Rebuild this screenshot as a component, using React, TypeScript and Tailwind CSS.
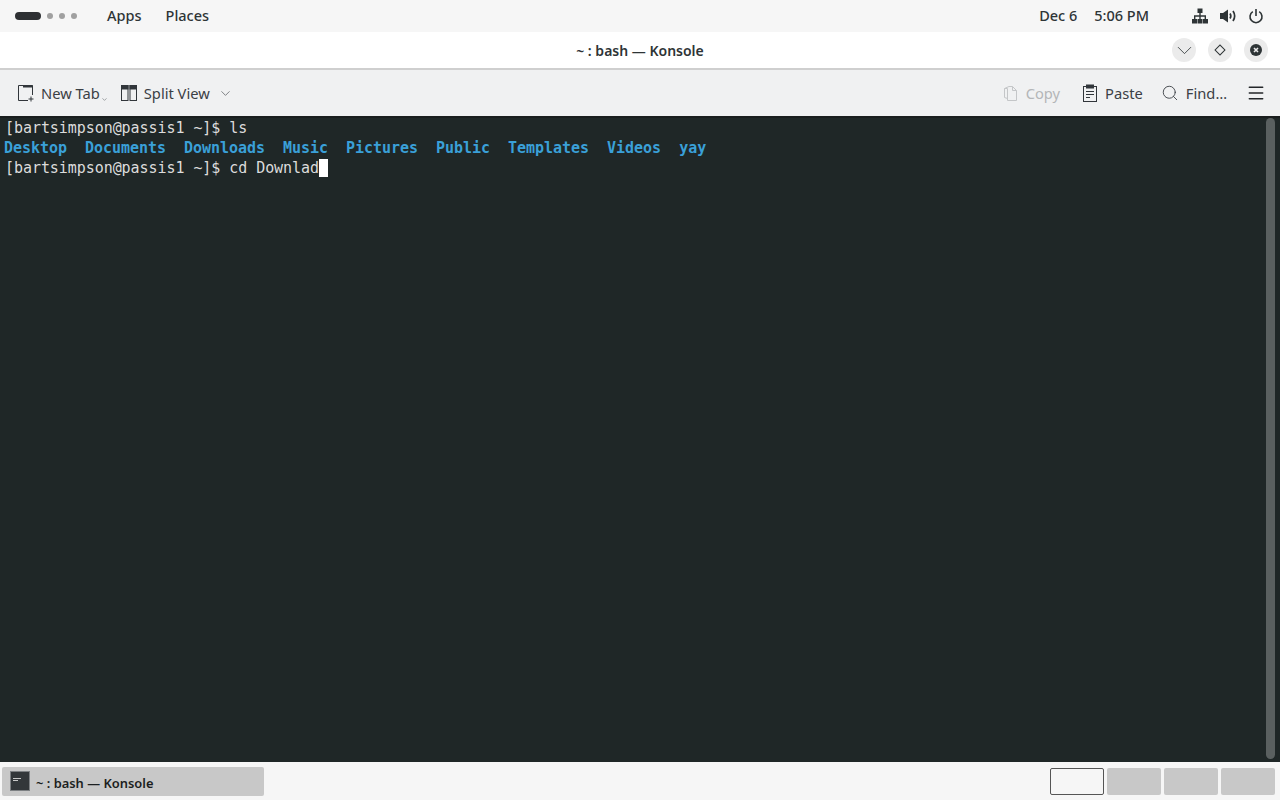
import React from 'react';
import { ChevronDown, Search, Menu } from 'lucide-react';

function NetworkIcon() {
  return (
    <svg width="16" height="16" viewBox="0 0 16 16" fill="#2e3436">
      <rect x="5.5" y="0.5" width="5" height="4.5" />
      <rect x="0" y="11" width="5" height="4.5" />
      <rect x="5.5" y="11" width="5" height="4.5" />
      <rect x="11" y="11" width="5" height="4.5" />
      <path d="M7.3 5h1.4v2.3H14v3.7h-1.4V8.7H8.7V11H7.3V8.7H3.4V11H2V7.3h5.3z" />
    </svg>
  );
}

function VolumeIcon() {
  return (
    <svg width="18" height="16" viewBox="0 0 18 16" fill="none" stroke="#2e3436">
      <path d="M1 5h3l5-3.5v13L4 11H1z" fill="#2e3436" stroke="none" />
      <path d="M11 5.5c1 1.5 1 3.5 0 5" strokeWidth="1.7" />
      <path d="M14 3c2 3 2 7 0 10" strokeWidth="1.7" />
    </svg>
  );
}

function PowerIcon() {
  return (
    <svg width="16" height="16" viewBox="0 0 16 16" fill="none" stroke="#2e3436" strokeWidth="1.6">
      <path d="M8 1v7" />
      <path d="M4.8 3.6a6 6 0 1 0 6.4 0" />
    </svg>
  );
}

function NewTabIcon() {
  return (
    <svg width="18" height="18" viewBox="0 0 18 18" fill="none" stroke="#31363b">
      <path d="M11 16.5H1.5V1.5h14V11" />
      <rect x="6" y="1" width="9.5" height="2.5" fill="#31363b" stroke="none" />
      <path d="M14 12.5v5M11.5 15h5" />
    </svg>
  );
}

function SplitIcon() {
  return (
    <svg width="16" height="16" viewBox="0 0 16 16" fill="none" stroke="#31363b">
      <rect x="0.5" y="0.5" width="6.5" height="15" />
      <rect x="9" y="0.5" width="6.5" height="15" />
      <rect x="0.5" y="0.5" width="6.5" height="3.5" fill="#31363b" />
      <rect x="9" y="0.5" width="6.5" height="3.5" fill="#31363b" />
    </svg>
  );
}

function CopyIcon() {
  return (
    <svg width="16" height="17" viewBox="0 0 16 17" fill="none" stroke="#c4c6c8">
      <path d="M1.5 3.5v9l3 1" />
      <path d="M1.5 3.5L6 1.5h3.5l4 4v10h-9v-12z" />
      <path d="M9.5 1.5v4h4" />
    </svg>
  );
}

function PasteIcon() {
  return (
    <svg width="16" height="18" viewBox="0 0 16 18" fill="none" stroke="#31363b">
      <rect x="1.5" y="2.5" width="13" height="15" />
      <rect x="4" y="0.5" width="8" height="4" fill="#31363b" stroke="none" />
      <path d="M4 7.5h8M4 10.5h8M4 13.5h4" />
    </svg>
  );
}

function TerminalIcon() {
  return (
    <svg width="20" height="20" viewBox="0 0 20 20">
      <rect x="0.5" y="0.5" width="19" height="19" fill="#33373a" stroke="#7d8083" />
      <path d="M3 7.5h8M3 9.5h5" stroke="#c8c8c8" strokeWidth="1" />
    </svg>
  );
}

const dirs = ['Desktop', 'Documents', 'Downloads', 'Music', 'Pictures', 'Public', 'Templates', 'Videos', 'yay'];

export default function App() {
  return (
    <div className="flex h-[800px] w-[1280px] flex-col overflow-hidden bg-[#f6f6f6] font-['Noto_Sans',sans-serif] text-[#2e3436]">
      {/* top panel */}
      <div className="flex h-[32px] items-center bg-[#f6f6f6] pl-[15px] pr-[16px] text-[14.5px] font-medium">
        <div className="flex items-center gap-[6px]">
          <span className="h-[8px] w-[26px] rounded-full bg-[#2e3033]" />
          <span className="size-[6px] rounded-full bg-[#a0a0a0]" />
          <span className="size-[6px] rounded-full bg-[#a0a0a0]" />
          <span className="size-[6px] rounded-full bg-[#a0a0a0]" />
        </div>
        <span className="ml-[30px]">Apps</span>
        <span className="ml-[24px]">Places</span>
        <span className="ml-auto">Dec 6</span>
        <span className="ml-[17px]">5:06 PM</span>
        <div className="ml-[43px] flex items-center gap-[11px]">
          <NetworkIcon />
          <VolumeIcon />
          <PowerIcon />
        </div>
      </div>

      {/* title bar */}
      <div className="relative flex h-[38px] items-center justify-center border-b-2 border-[#cfcfcf] bg-white">
        <span className="text-[14px] font-semibold leading-[21px] text-[#2e3436]">~ : bash — Konsole</span>
        <div className="absolute right-[12px] top-[6px] flex gap-[12px]">
          <span className="flex size-[24px] items-center justify-center rounded-full bg-[#ebebeb]">
            <ChevronDown size={25} strokeWidth={0.8} color="#2e3436" className="shrink-0" />
          </span>
          <span className="flex size-[24px] items-center justify-center rounded-full bg-[#ebebeb]">
            <span className="size-[8px] rotate-45 border border-[#2e3436]" />
          </span>
          <span className="flex size-[24px] items-center justify-center rounded-full bg-[#ebebeb]">
            <svg width="12" height="12" viewBox="0 0 12 12">
              <circle cx="6" cy="6" r="6" fill="#2e3436" />
              <path d="M4 4l4 4M8 4l-4 4" stroke="#ebebeb" strokeWidth="1.6" />
            </svg>
          </span>
        </div>
      </div>

      {/* toolbar */}
      <div className="flex h-[46px] items-center bg-[#f0f1f2] pl-[17px] pr-[14px] text-[14.7px] leading-[21px] text-[#3b4045]">
        <NewTabIcon />
        <span className="ml-[6px]">New Tab</span>
        <ChevronDown size={7} strokeWidth={1.5} className="ml-px mt-[13px]" />
        <span className="ml-[13px] flex"><SplitIcon /></span>
        <span className="ml-[7px]">Split View</span>
        <ChevronDown size={15} strokeWidth={1} className="ml-[8px]" />
        <span className="ml-auto flex"><CopyIcon /></span>
        <span className="ml-[7px] text-[#b4b6b8]">Copy</span>
        <span className="ml-[22px] flex"><PasteIcon /></span>
        <span className="ml-[7px]">Paste</span>
        <Search size={18} strokeWidth={1.2} className="ml-[20px] -translate-x-[2px]" />
        <span className="ml-[5px]">Find…</span>
        <Menu size={20} strokeWidth={1.8} color="#232629" className="ml-[19px]" />
      </div>

      {/* terminal */}
      <div className="relative flex-1 border-t-2 border-[#1a1e1e] bg-[#1f2727] font-['DejaVu_Sans_Mono',monospace] text-[15px] leading-[20px] tracking-[-0.06px] text-[#dcdcdc]">
        <div className="pl-[5px]">[bartsimpson@passis1 ~]$ ls</div>
        <div className="flex whitespace-pre pl-[4px] font-bold tracking-[-0.03px] text-[#3aa0d8]">
          {dirs.map((d, i) => (
            <span key={d} className={i === 0 ? '' : 'ml-[18px]'}>{d}</span>
          ))}
        </div>
        <div className="flex pl-[5px]">
          <span className="whitespace-pre">[bartsimpson@passis1 ~]$ cd Downlad</span>
          <span className="h-[18px] w-[9px] self-center bg-white" />
        </div>
        <div className="absolute bottom-[3px] right-[5px] top-0 w-[9px] rounded-full bg-[#5a6060]" />
      </div>

      {/* bottom panel */}
      <div className="flex h-[38px] items-center bg-[#f6f6f6] pl-[2px] pr-[5px]">
        <div className="flex h-[29px] w-[262px] items-center rounded-[2px] bg-[#c8c8c8] pl-[8px] text-[12.9px] font-semibold text-[#1c1f21]">
          <TerminalIcon />
          <span className="ml-[6px] mt-[6px]">~ : bash — Konsole</span>
        </div>
        <div className="ml-auto flex gap-[3px]">
          <div className="h-[27px] w-[54px] rounded-[2px] border border-[#555] bg-[#f6f6f6]" />
          <div className="h-[27px] w-[54px] rounded-[2px] bg-[#c8c8c8]" />
          <div className="h-[27px] w-[54px] rounded-[2px] bg-[#c8c8c8]" />
          <div className="h-[27px] w-[54px] rounded-[2px] bg-[#c8c8c8]" />
        </div>
      </div>
    </div>
  );
}
